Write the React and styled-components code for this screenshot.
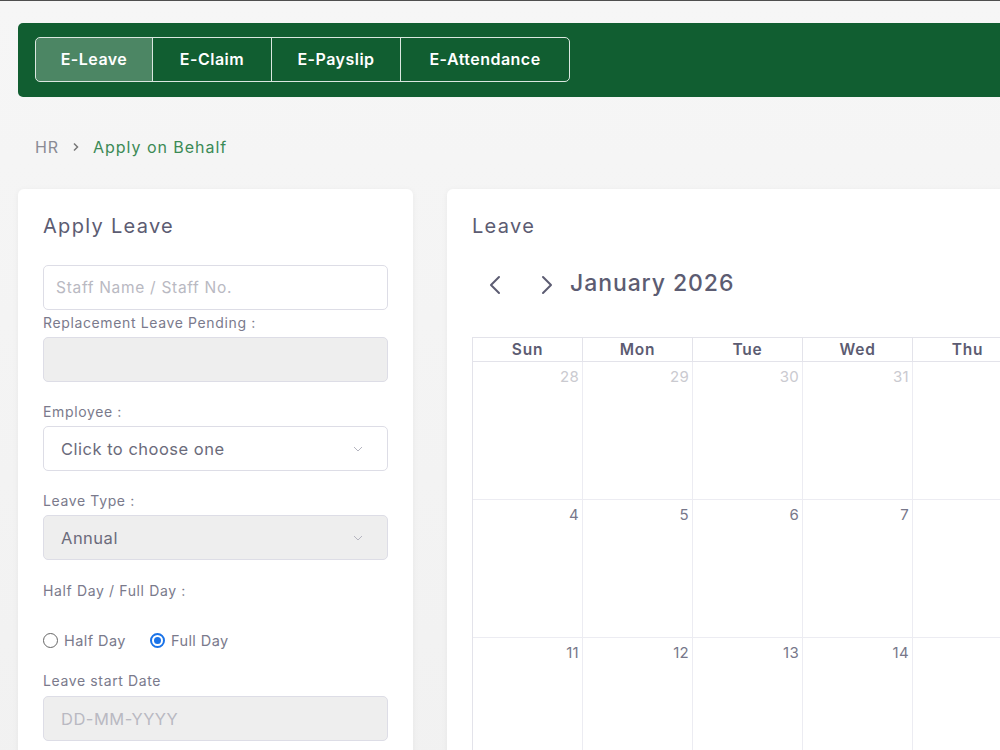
import React from "react";
import styled, { createGlobalStyle } from "styled-components";

const GlobalStyle = createGlobalStyle`
  html, body {
    margin: 0;
    padding: 0;
    overflow: hidden;
  }
  body {
    font-family: Inter, "Open Sans", Arial, sans-serif;
    background: #f3f3f3;
    color: #5c5c72;
  }
  * { box-sizing: border-box; }
`;

const Page = styled.div`
  width: 1400px;
  min-height: 750px;
  border-top: 1px solid #4f4f4f;
  background: linear-gradient(#f6f6f6, #f1f1f1);
  padding: 22px 0 0 18px;
`;

const TopBar = styled.header`
  height: 74px;
  background: #115e31;
  border-radius: 5px;
  display: flex;
  align-items: flex-start;
  padding: 14px 0 0 17px;
`;

const TabGroup = styled.nav`
  display: flex;
  border: 1px solid rgba(255, 255, 255, 0.85);
  border-radius: 5px;
  overflow: hidden;
  height: 45px;
`;

const Tab = styled.div`
  display: flex;
  align-items: center;
  justify-content: center;
  width: ${(p) => p.$w}px;
  color: #ffffff;
  font-size: 16px;
  font-weight: 600;
  letter-spacing: 0.03em;
  padding-bottom: 2px;
  background: ${(p) => (p.$active ? "rgba(255,255,255,0.25)" : "transparent")};
  & + & {
    border-left: 1px solid rgba(255, 255, 255, 0.85);
  }
`;

const Crumbs = styled.div`
  display: flex;
  align-items: center;
  gap: 13px;
  padding: 7px 0 0 17px;
  height: 92px;
  font-size: 16px;
  letter-spacing: 0.06em;
`;

const CrumbRoot = styled.span`
  color: #8a8a94;
`;

const CrumbCurrent = styled.span`
  color: #3b8a55;
`;

const Columns = styled.div`
  display: grid;
  grid-template-columns: 395px 1fr;
  gap: 34px;
`;

const Card = styled.section`
  background: #ffffff;
  border-radius: 6px;
  box-shadow: 0 1px 6px rgba(0, 0, 0, 0.05);
  padding: 22px 25px 20px 25px;
  min-height: 600px;
`;

const CardTitle = styled.h2`
  margin: 0;
  font-size: 20px;
  font-weight: 400;
  letter-spacing: 0.065em;
  color: #5c5c72;
  line-height: 30px;
`;

const Form = styled.div`
  display: flex;
  flex-direction: column;
  margin-top: 24px;
`;

const Label = styled.div`
  font-size: 14px;
  letter-spacing: 0.045em;
  color: #7a7a8c;
  line-height: 18px;
  margin: ${(p) => p.$m || "0"};
`;

const Field = styled.div`
  height: 45px;
  border: 1px solid #dddde6;
  border-radius: 5px;
  background: ${(p) => (p.$disabled ? "#eeeeee" : "#ffffff")};
  display: flex;
  align-items: center;
  justify-content: space-between;
  padding: 0 ${(p) => (p.$select ? "24px 0 17px" : "12px")};
  font-size: ${(p) => (p.$select ? "16.5px" : "15.5px")};
  letter-spacing: ${(p) => (p.$select ? "0.03em" : "0.045em")};
  color: ${(p) => (p.$placeholder ? "#b9b9c2" : "#6b6b7b")};
  margin: ${(p) => p.$m || "0"};
`;

const Chevron = () => (
  <svg width="10" height="6" viewBox="0 0 10 6" fill="none">
    <path d="M1 1l4 4 4-4" stroke="#b5b5c0" strokeWidth="1" />
  </svg>
);

const RadioRow = styled.div`
  display: flex;
  align-items: center;
  gap: 24px;
  margin-top: 32px;
  font-size: 14.5px;
  letter-spacing: 0.03em;
  color: #7a7a8c;
`;

const RadioOption = styled.label`
  display: flex;
  align-items: center;
  gap: 6px;
`;

const RadioDot = styled.span`
  width: 15px;
  height: 15px;
  border-radius: 50%;
  border: ${(p) => (p.$checked ? "2px solid #1a73e8" : "1px solid #666")};
  display: inline-flex;
  align-items: center;
  justify-content: center;
  &::after {
    content: "";
    width: 7px;
    height: 7px;
    border-radius: 50%;
    background: ${(p) => (p.$checked ? "#1a73e8" : "transparent")};
  }
`;

const CalHeader = styled.div`
  display: flex;
  align-items: center;
  margin-top: 24px;
  height: 40px;
`;

const NavBtn = styled.button`
  border: 0;
  background: transparent;
  width: 46px;
  height: 40px;
  padding: 0;
  display: flex;
  align-items: center;
  justify-content: center;
  margin-left: ${(p) => p.$ml || 0}px;
`;

const MonthTitle = styled.div`
  font-size: 23px;
  color: #5c5c72;
  font-weight: 500;
  letter-spacing: 0.04em;
  margin-top: -4px;
`;

const Grid = styled.div`
  display: grid;
  grid-template-columns: repeat(7, 110px);
  margin-top: 32px;
  border-top: 1px solid #e3e3ea;
  border-left: 1px solid #e3e3ea;
`;

const DayHead = styled.div`
  height: 24px;
  display: flex;
  align-items: center;
  justify-content: center;
  font-size: 15.5px;
  font-weight: 600;
  letter-spacing: 0.05em;
  color: #5c5c72;
  border-right: 1px solid #e3e3ea;
  border-bottom: 1px solid #e3e3ea;
`;

const DayCell = styled.div`
  height: 138px;
  border-right: 1px solid #ececf2;
  border-bottom: 1px solid #ececf2;
  text-align: right;
  padding: 5px 3px 0 0;
  font-size: 15px;
  letter-spacing: 0.02em;
  color: ${(p) => (p.$muted ? "#cacad0" : "#77778a")};
`;

const Arrow = ({ dir }) => (
  <svg width="12" height="20" viewBox="0 0 12 20" fill="none">
    <path
      d={dir === "left" ? "M10 2L2 10l8 8" : "M2 2l8 8-8 8"}
      stroke="#5c5c72"
      strokeWidth="2"
      strokeLinecap="round"
      strokeLinejoin="round"
    />
  </svg>
);

const tabs = [
  { name: "E-Leave", w: 116 },
  { name: "E-Claim", w: 119 },
  { name: "E-Payslip", w: 129 },
  { name: "E-Attendance", w: 169 },
];

const days = ["Sun", "Mon", "Tue", "Wed", "Thu", "Fri", "Sat"];
const weeks = [
  [[28, 1], [29, 1], [30, 1], [31, 1], [1], [2], [3]],
  [[4], [5], [6], [7], [8], [9], [10]],
  [[11], [12], [13], [14], [15], [16], [17]],
];

export default function App() {
  return (
    <>
      <GlobalStyle />
      <Page>
        <TopBar>
          <TabGroup>
            {tabs.map((t, i) => (
              <Tab key={t.name} $w={t.w} $active={i === 0}>
                {t.name}
              </Tab>
            ))}
          </TabGroup>
        </TopBar>

        <Crumbs>
          <CrumbRoot>HR</CrumbRoot>
          <svg width="8" height="10" viewBox="0 0 8 10" fill="none">
            <path d="M2 1.5L5.5 5 2 8.5" stroke="#777" strokeWidth="1.5" />
          </svg>
          <CrumbCurrent>Apply on Behalf</CrumbCurrent>
        </Crumbs>

        <Columns>
          <Card>
            <CardTitle>Apply Leave</CardTitle>
            <Form>
              <Field $placeholder>Staff Name / Staff No.</Field>
              <Label $m="4px 0 5px">Replacement Leave Pending :</Label>
              <Field $disabled />
              <Label $m="21px 0 5px">Employee :</Label>
              <Field $select>
                Click to choose one
                <Chevron />
              </Field>
              <Label $m="21px 0 5px">Leave Type :</Label>
              <Field $select $disabled>
                Annual
                <Chevron />
              </Field>
              <Label $m="22px 0 0">Half Day / Full Day :</Label>
              <RadioRow>
                <RadioOption>
                  <RadioDot />
                  Half Day
                </RadioOption>
                <RadioOption>
                  <RadioDot $checked />
                  Full Day
                </RadioOption>
              </RadioRow>
              <Label $m="23px 0 6px">Leave start Date</Label>
              <Field $select $disabled $placeholder>
                DD-MM-YYYY
              </Field>
            </Form>
          </Card>

          <Card>
            <CardTitle>Leave</CardTitle>
            <CalHeader>
              <NavBtn $ml={0}>
                <Arrow dir="left" />
              </NavBtn>
              <NavBtn $ml={6}>
                <Arrow dir="right" />
              </NavBtn>
              <MonthTitle>January 2026</MonthTitle>
            </CalHeader>
            <Grid>
              {days.map((d) => (
                <DayHead key={d}>{d}</DayHead>
              ))}
              {weeks.flat().map(([n, muted], i) => (
                <DayCell key={i} $muted={!!muted}>
                  {n}
                </DayCell>
              ))}
            </Grid>
          </Card>
        </Columns>
      </Page>
    </>
  );
}
